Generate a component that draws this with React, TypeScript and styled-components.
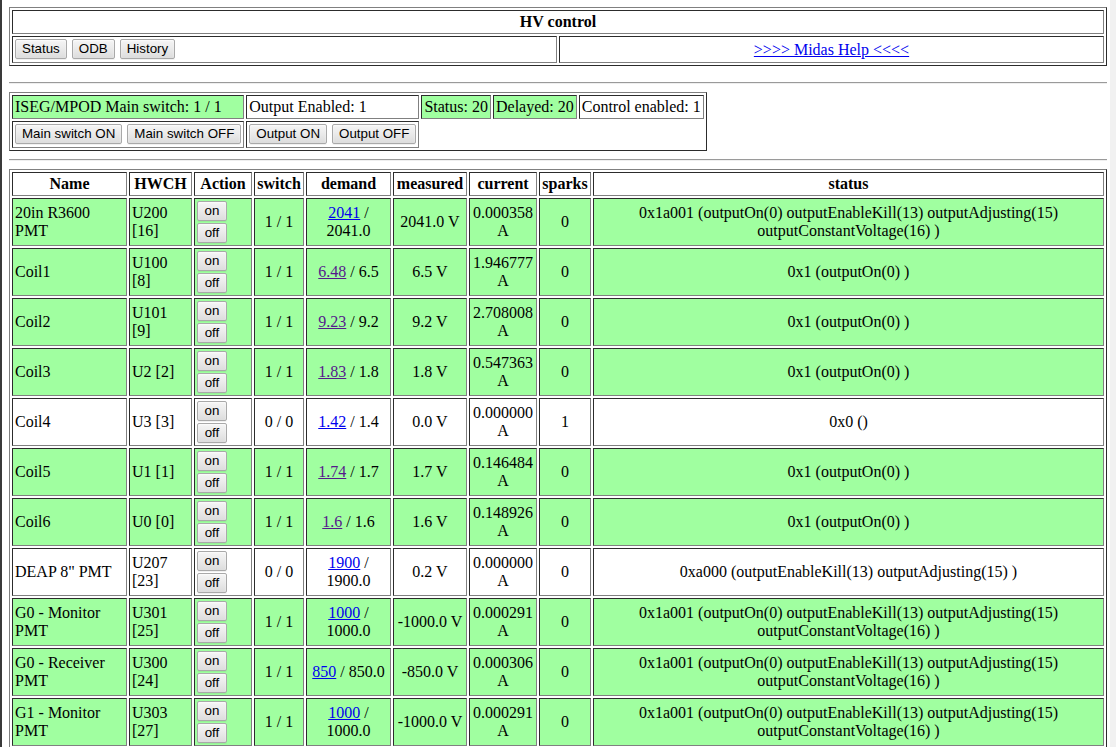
import React from 'react';
import styled, { createGlobalStyle } from 'styled-components';

const GREEN = '#a0ffa0';

const GlobalStyle = createGlobalStyle`
  html {
    background: #ffffff;
    box-shadow: inset 2px 0 0 #3a3a3a, inset -6px 0 0 #f1f1f1;
    min-height: 100%;
  }
  body {
    margin: 7px 9px 8px 9px;
    font-family: "Liberation Serif", "Times New Roman", serif;
    font-size: 16px;
    color: #000;
  }
`;

const Frame = styled.table<{ $full?: boolean; $fixed?: boolean }>`
  border: 1px outset #808080;
  border-collapse: separate;
  border-spacing: 2px;
  width: ${(p) => (p.$full ? '100%' : 'auto')};
  table-layout: ${(p) => (p.$fixed ? 'fixed' : 'auto')};
  font-family: inherit;
  font-size: 16px;
`;

const Cell = styled.td<{ $bg?: string; $align?: string; $nowrap?: boolean }>`
  box-sizing: border-box;
  border: 1px inset #808080;
  padding: 2px;
  background: ${(p) => p.$bg ?? 'transparent'};
  text-align: ${(p) => p.$align ?? 'left'};
  vertical-align: middle;
  white-space: ${(p) => (p.$nowrap ? 'nowrap' : 'normal')};
  line-height: 18px;
`;

const Head = styled.th<{ $w?: number }>`
  box-sizing: border-box;
  border: 1px inset #808080;
  padding: 2px;
  background: #ffffff;
  text-align: center;
  font-weight: bold;
  white-space: nowrap;
  line-height: 18px;
  width: ${(p) => (p.$w ? `${p.$w}px` : 'auto')};
`;

const ButtonRow = styled.div`
  display: flex;
  align-items: flex-start;
  gap: 5px;
  height: 21px;
`;

const ButtonStack = styled.div`
  display: flex;
  flex-direction: column;
  align-items: flex-start;
  gap: 2px;
`;

const Btn = styled.button<{ $min?: number }>`
  box-sizing: border-box;
  height: 20px;
  min-width: ${(p) => (p.$min ? `${p.$min}px` : '0')};
  margin: 0;
  padding: 1px 6px;
  font-family: "Liberation Sans", Arial, sans-serif;
  font-size: 13.333px;
  line-height: 16px;
  color: #000;
  background: linear-gradient(#f4f4f4, #ededed 38%, #dcdcdc);
  border: 1px solid #a9a9a9;
  border-radius: 2px;
  box-shadow: 0 1px 0 rgba(0, 0, 0, 0.06), inset 0 1px 2px rgba(255, 255, 255, 0.75);
  white-space: nowrap;
  cursor: default;
`;

const Link = styled.a<{ $visited?: boolean }>`
  color: ${(p) => (p.$visited ? '#551a8b' : '#0000ee')};
  text-decoration: underline;
`;

const Rule = styled.hr<{ $top: number }>`
  margin: ${(p) => p.$top}px 0 8px;
  height: 0;
  border: 0;
  border-top: 1px solid #9a9a9a;
  border-bottom: 1px solid #eeeeee;
`;

type Row = {
  name: string;
  hw: string;
  sw: string;
  demand: string;
  set: string;
  visited: boolean;
  meas: string;
  cur: string;
  sparks: string;
  status: string;
  on: boolean;
};

const S_FULL = '0x1a001 (outputOn(0) outputEnableKill(13) outputAdjusting(15) outputConstantVoltage(16) )';
const S_ON = '0x1 (outputOn(0) )';

const rows: Row[] = [
  { name: '20in R3600 PMT', hw: 'U200 [16]', sw: '1 / 1', demand: '2041', set: '2041.0', visited: false, meas: '2041.0 V', cur: '0.000358 A', sparks: '0', status: S_FULL, on: true },
  { name: 'Coil1', hw: 'U100 [8]', sw: '1 / 1', demand: '6.48', set: '6.5', visited: true, meas: '6.5 V', cur: '1.946777 A', sparks: '0', status: S_ON, on: true },
  { name: 'Coil2', hw: 'U101 [9]', sw: '1 / 1', demand: '9.23', set: '9.2', visited: true, meas: '9.2 V', cur: '2.708008 A', sparks: '0', status: S_ON, on: true },
  { name: 'Coil3', hw: 'U2 [2]', sw: '1 / 1', demand: '1.83', set: '1.8', visited: true, meas: '1.8 V', cur: '0.547363 A', sparks: '0', status: S_ON, on: true },
  { name: 'Coil4', hw: 'U3 [3]', sw: '0 / 0', demand: '1.42', set: '1.4', visited: false, meas: '0.0 V', cur: '0.000000 A', sparks: '1', status: '0x0 ()', on: false },
  { name: 'Coil5', hw: 'U1 [1]', sw: '1 / 1', demand: '1.74', set: '1.7', visited: true, meas: '1.7 V', cur: '0.146484 A', sparks: '0', status: S_ON, on: true },
  { name: 'Coil6', hw: 'U0 [0]', sw: '1 / 1', demand: '1.6', set: '1.6', visited: true, meas: '1.6 V', cur: '0.148926 A', sparks: '0', status: S_ON, on: true },
  { name: 'DEAP 8" PMT', hw: 'U207 [23]', sw: '0 / 0', demand: '1900', set: '1900.0', visited: false, meas: '0.2 V', cur: '0.000000 A', sparks: '0', status: '0xa000 (outputEnableKill(13) outputAdjusting(15) )', on: false },
  { name: 'G0 - Monitor PMT', hw: 'U301 [25]', sw: '1 / 1', demand: '1000', set: '1000.0', visited: false, meas: '-1000.0 V', cur: '0.000291 A', sparks: '0', status: S_FULL, on: true },
  { name: 'G0 - Receiver PMT', hw: 'U300 [24]', sw: '1 / 1', demand: '850', set: '850.0', visited: false, meas: '-850.0 V', cur: '0.000306 A', sparks: '0', status: S_FULL, on: true },
  { name: 'G1 - Monitor PMT', hw: 'U303 [27]', sw: '1 / 1', demand: '1000', set: '1000.0', visited: false, meas: '-1000.0 V', cur: '0.000291 A', sparks: '0', status: S_FULL, on: true },
];

const columns: { label: string; w: number }[] = [
  { label: 'Name', w: 115 },
  { label: 'HWCH', w: 63 },
  { label: 'Action', w: 58 },
  { label: 'switch', w: 50 },
  { label: 'demand', w: 85 },
  { label: 'measured', w: 74 },
  { label: 'current', w: 68 },
  { label: 'sparks', w: 52 },
  { label: 'status', w: 511 },
];

export default function App() {
  return (
    <>
      <GlobalStyle />
      <Frame $full>
        <tbody>
          <tr>
            <Head colSpan={2}>HV control</Head>
          </tr>
          <tr>
            <Cell style={{ width: '50%' }}>
              <ButtonRow>
                <Btn>Status</Btn>
                <Btn>ODB</Btn>
                <Btn>History</Btn>
              </ButtonRow>
            </Cell>
            <Cell $align="center">
              <Link href="#">&gt;&gt;&gt;&gt; Midas Help &lt;&lt;&lt;&lt;</Link>
            </Cell>
          </tr>
        </tbody>
      </Frame>
      <Rule $top={16} />
      <Frame>
        <tbody>
          <tr>
            <Cell $bg={GREEN} $nowrap>ISEG/MPOD Main switch: 1 / 1</Cell>
            <Cell $nowrap>Output Enabled: 1</Cell>
            <Cell $bg={GREEN} $nowrap>Status: 20</Cell>
            <Cell $bg={GREEN} $nowrap>Delayed: 20</Cell>
            <Cell $nowrap>Control enabled: 1</Cell>
          </tr>
          <tr>
            <Cell>
              <ButtonRow>
                <Btn>Main switch ON</Btn>
                <Btn>Main switch OFF</Btn>
              </ButtonRow>
            </Cell>
            <Cell>
              <ButtonRow>
                <Btn>Output ON</Btn>
                <Btn>Output OFF</Btn>
              </ButtonRow>
            </Cell>
          </tr>
        </tbody>
      </Frame>
      <Rule $top={8} />
      <Frame $full $fixed>
        <thead>
          <tr>
            {columns.map((c) => (
              <Head key={c.label} $w={c.w}>
                {c.label}
              </Head>
            ))}
          </tr>
        </thead>
        <tbody>
          {rows.map((r) => {
            const bg = r.on ? GREEN : '#ffffff';
            return (
              <tr key={r.name}>
                <Cell $bg={bg}>{r.name}</Cell>
                <Cell $bg={bg}>{r.hw}</Cell>
                <Cell $bg={bg}>
                  <ButtonStack>
                    <Btn $min={30}>on</Btn>
                    <Btn $min={30}>off</Btn>
                  </ButtonStack>
                </Cell>
                <Cell $bg={bg} $align="center">{r.sw}</Cell>
                <Cell $bg={bg} $align="center">
                  <Link href="#" $visited={r.visited}>{r.demand}</Link> / {r.set}
                </Cell>
                <Cell $bg={bg} $align="center">{r.meas}</Cell>
                <Cell $bg={bg} $align="center">{r.cur}</Cell>
                <Cell $bg={bg} $align="center">{r.sparks}</Cell>
                <Cell $bg={bg} $align="center">{r.status}</Cell>
              </tr>
            );
          })}
        </tbody>
      </Frame>
    </>
  );
}
